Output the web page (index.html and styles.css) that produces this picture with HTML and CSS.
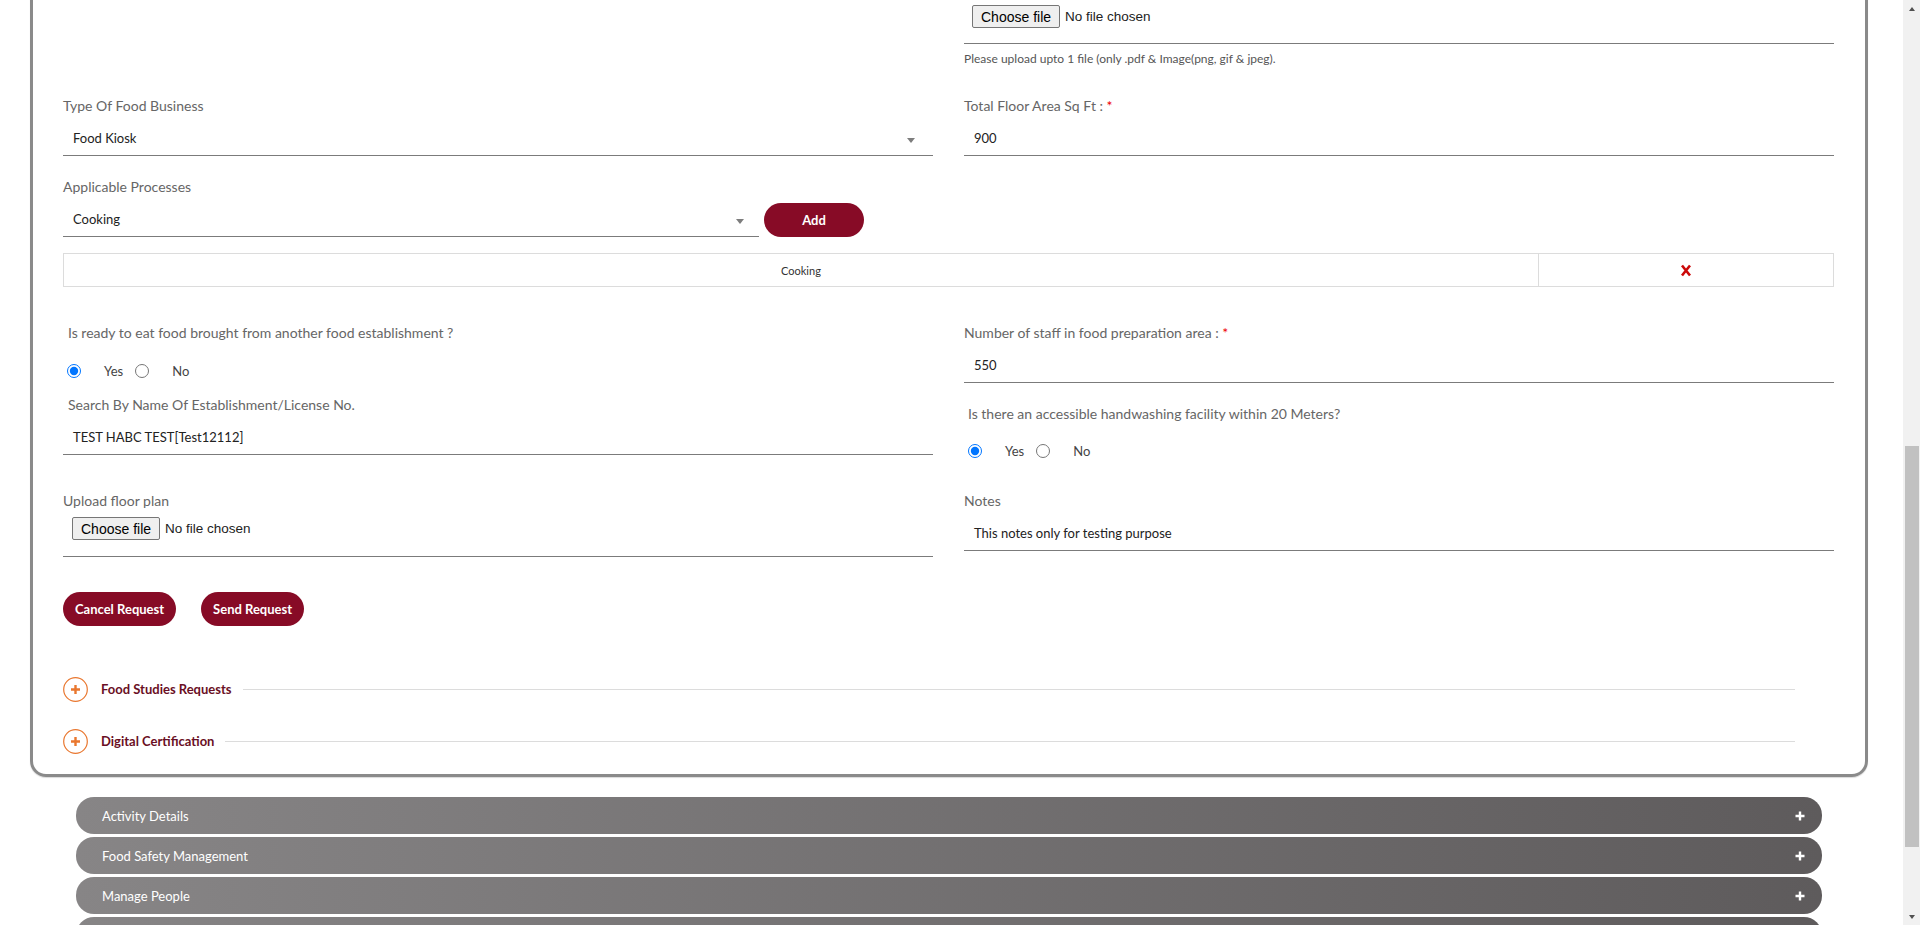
FILE: index.html
```html
<!DOCTYPE html>
<html lang="en">
<head>
<meta charset="utf-8">
<title>Food Business Request</title>
<link rel="stylesheet" href="styles.css">
</head>
<body>
<main class="page">
  <section class="card">
    <div class="card-upper"></div>

    <div class="grid2 row-a">
      <div></div>
      <div class="field">
        <div class="control file-control">
          <button type="button" class="file-btn">Choose file</button>
          <span class="file-name">No file chosen</span>
        </div>
        <p class="hint">Please upload upto 1 file (only .pdf &amp; Image(png, gif &amp; jpeg).</p>
      </div>
    </div>

    <div class="grid2 row-b">
      <div class="field">
        <label class="lbl">Type Of Food Business</label>
        <div class="control select select-wide"><span>Food Kiosk</span><i class="caret"></i></div>
      </div>
      <div class="field">
        <label class="lbl">Total Floor Area Sq Ft : <span class="req">*</span></label>
        <div class="control"><span>900</span></div>
      </div>
    </div>

    <div class="grid2 row-c">
      <div class="field">
        <label class="lbl">Applicable Processes</label>
        <div class="select-add">
          <div class="control select select-narrow"><span>Cooking</span><i class="caret"></i></div>
          <button type="button" class="btn btn-add">Add</button>
        </div>
      </div>
      <div></div>
    </div>

    <table class="proc-table">
      <tr>
        <td class="proc-name">Cooking</td>
        <td class="proc-del">
          <svg class="del-icon" width="12" height="13" viewBox="0 0 12 13" aria-hidden="true">
            <path d="M2 1.5 L10 11.5 M10 1.5 L2 11.5" stroke="#cc0a0a" stroke-width="2.6" fill="none"/>
          </svg>
        </td>
      </tr>
    </table>

    <div class="grid2 row-d">
      <div class="col">
        <label class="lbl q">Is ready to eat food brought from another food establishment ?</label>
        <div class="radios radios-1">
          <input type="radio" name="rte" class="radio" checked><span class="opt opt-yes">Yes</span>
          <input type="radio" name="rte" class="radio"><span class="opt">No</span>
        </div>
        <label class="lbl q search-lbl">Search By Name Of Establishment/License No.</label>
        <div class="control"><span>TEST HABC TEST[Test12112]</span></div>
      </div>
      <div class="col">
        <label class="lbl">Number of staff in food preparation area : <span class="req">*</span></label>
        <div class="control"><span>550</span></div>
        <label class="lbl q2">Is there an accessible handwashing facility within 20 Meters?</label>
        <div class="radios radios-2">
          <input type="radio" name="hw" class="radio" checked><span class="opt opt-yes">Yes</span>
          <input type="radio" name="hw" class="radio"><span class="opt">No</span>
        </div>
      </div>
    </div>

    <div class="grid2 row-e">
      <div class="field">
        <label class="lbl">Upload floor plan</label>
        <div class="control file-control file-control-2">
          <button type="button" class="file-btn">Choose file</button>
          <span class="file-name">No file chosen</span>
        </div>
      </div>
      <div class="field">
        <label class="lbl">Notes</label>
        <div class="control"><span>This notes only for testing purpose</span></div>
      </div>
    </div>

    <div class="actions">
      <button type="button" class="btn btn-action">Cancel Request</button>
      <button type="button" class="btn btn-action">Send Request</button>
    </div>

    <div class="acc">
      <div class="acc-item">
        <svg class="acc-icon" width="25" height="25" viewBox="0 0 25 25" aria-hidden="true">
          <circle cx="12.5" cy="12.5" r="11.8" fill="#fff" stroke="#e9772f" stroke-width="1.2"/>
          <path d="M12.5 8 V17 M8 12.5 H17" stroke="#e9772f" stroke-width="2.4" fill="none"/>
        </svg>
        <span class="acc-title">Food Studies Requests</span>
        <span class="acc-line"></span>
      </div>
      <div class="acc-item">
        <svg class="acc-icon" width="25" height="25" viewBox="0 0 25 25" aria-hidden="true">
          <circle cx="12.5" cy="12.5" r="11.8" fill="#fff" stroke="#e9772f" stroke-width="1.2"/>
          <path d="M12.5 8 V17 M8 12.5 H17" stroke="#e9772f" stroke-width="2.4" fill="none"/>
        </svg>
        <span class="acc-title">Digital Certification</span>
        <span class="acc-line"></span>
      </div>
    </div>
  </section>

  <div class="bars">
    <div class="bar"><span>Activity Details</span><svg class="bar-plus" width="10" height="10" viewBox="0 0 10 10" aria-hidden="true"><path d="M5 0.5 V9.5 M0.5 5 H9.5" stroke="#fff" stroke-width="2.4"/></svg></div>
    <div class="bar"><span>Food Safety Management</span><svg class="bar-plus" width="10" height="10" viewBox="0 0 10 10" aria-hidden="true"><path d="M5 0.5 V9.5 M0.5 5 H9.5" stroke="#fff" stroke-width="2.4"/></svg></div>
    <div class="bar"><span>Manage People</span><svg class="bar-plus" width="10" height="10" viewBox="0 0 10 10" aria-hidden="true"><path d="M5 0.5 V9.5 M0.5 5 H9.5" stroke="#fff" stroke-width="2.4"/></svg></div>
    <div class="bar"><span></span><svg class="bar-plus" width="10" height="10" viewBox="0 0 10 10" aria-hidden="true"><path d="M5 0.5 V9.5 M0.5 5 H9.5" stroke="#fff" stroke-width="2.4"/></svg></div>
    <div class="bar"><span></span><svg class="bar-plus" width="10" height="10" viewBox="0 0 10 10" aria-hidden="true"><path d="M5 0.5 V9.5 M0.5 5 H9.5" stroke="#fff" stroke-width="2.4"/></svg></div>
    <div class="bar"><span></span><svg class="bar-plus" width="10" height="10" viewBox="0 0 10 10" aria-hidden="true"><path d="M5 0.5 V9.5 M0.5 5 H9.5" stroke="#fff" stroke-width="2.4"/></svg></div>
  </div>
</main>

<aside class="scrollbar" aria-hidden="true">
  <span class="sb-btn"><i class="sb-arrow sb-up"></i></span>
  <span class="sb-track"><span class="sb-thumb"></span></span>
  <span class="sb-btn"><i class="sb-arrow sb-down"></i></span>
</aside>

<script src="script.js"></script>
</body>
</html>
```

FILE: styles.css
```css
* { box-sizing: border-box; }

html { scroll-behavior: auto; }

body {
  margin: 0;
  overflow-x: hidden;
  font-family: Lato, "Noto Sans", sans-serif;
  color: #333;
  background: #fff;
}

/* page area leaves room for the scrollbar column on the right */
.page {
  margin-right: 17px;
  padding: 20px 0 31px;
}

/* classic scrollbar drawn over the right edge of the window */
.scrollbar {
  position: fixed;
  top: 0;
  right: 0;
  width: 17px;
  height: 100vh;
  background: #f1f1f1;
  display: flex;
  flex-direction: column;
}
.sb-btn {
  flex: 0 0 17px;
  display: flex;
  align-items: center;
  justify-content: center;
}
.sb-arrow {
  width: 0;
  height: 0;
  border-left: 3.5px solid transparent;
  border-right: 3.5px solid transparent;
}
.sb-up { border-bottom: 4px solid #505050; margin-left: 1px; }
.sb-down { border-top: 4px solid #505050; margin-left: 1px; }
.sb-track {
  flex: 1;
  padding-top: 429px;
}
.sb-thumb {
  display: block;
  height: 401px;
  margin: 0 1px 0 2px;
  background: #c1c1c1;
}

.card {
  margin: 0 35px 0 30px;
  border: 3px solid #8a8a8a;
  border-radius: 16px;
  padding: 0 31px 20px 30px;
  box-shadow: 0 1px 1px rgba(0, 0, 0, 0.15);
}

.card-upper { height: 969px; }

.grid2 {
  display: grid;
  grid-template-columns: 1fr 1fr;
  column-gap: 31px;
  align-items: start;
}

.row-b { margin-top: 28px; }
.row-c { margin-top: 21px; }
.row-d { margin-top: 36px; }
.row-e { margin-top: 30px; }

.field, .col { display: flex; flex-direction: column; }

.lbl {
  display: block;
  font-size: 14px;
  line-height: 20px;
  color: #666;
}

.req { color: #e00; }

.control {
  height: 35px;
  margin-top: 5px;
  border-bottom: 1px solid #7b7b7b;
  display: flex;
  align-items: center;
  padding-left: 10px;
  font-size: 13px;
  color: #222;
}

.select { justify-content: space-between; }
.select-wide { padding-right: 18px; }
.select-narrow { padding-right: 15px; }

.caret {
  width: 0;
  height: 0;
  border-left: 4px solid transparent;
  border-right: 4px solid transparent;
  border-top: 5px solid #7d7d7d;
  margin-top: 4px;
}

.file-control {
  height: 41px;
  margin-top: 0;
  align-items: flex-start;
  padding: 2px 0 0 8px;
}

.file-control-2 {
  margin-top: 5px;
  padding: 1px 0 0 9px;
}

.file-btn {
  height: 23px;
  padding: 0 8px;
  background: #efefef;
  border: 1px solid #767676;
  border-radius: 2px;
  font-family: "Liberation Sans", Arial, sans-serif;
  font-size: 14px;
  color: #000;
  cursor: pointer;
}

.file-name {
  margin-left: 5px;
  line-height: 23px;
  font-family: "Liberation Sans", Arial, sans-serif;
  font-size: 13.5px;
  color: #222;
}

.hint {
  margin: 6px 0 0;
  font-size: 12px;
  line-height: 18px;
  color: #555;
}

.select-add {
  display: flex;
  align-items: flex-end;
  gap: 5px;
  margin-top: 5px;
}
.select-add .control {
  flex: 0 0 80%;
  margin-top: 0;
}

.btn {
  height: 34px;
  border: 0;
  border-radius: 17px;
  background: #870b26;
  color: #fff;
  font-family: Lato, "Noto Sans", sans-serif;
  font-weight: 700;
  font-size: 13px;
  cursor: pointer;
}

.btn-add { width: 100px; }
.btn-action { padding: 0 12px; }

.proc-table {
  width: 100%;
  border-collapse: collapse;
  margin-top: 16px;
}
.proc-table td {
  height: 33px;
  padding: 0;
  border: 1px solid #dcdcdc;
  text-align: center;
  font-size: 11px;
  color: #333;
}
.proc-name { width: 83.33%; }
.del-icon { display: inline-block; vertical-align: middle; }

.q { padding-left: 5px; }
.search-lbl { margin-top: 14px; }
.q2 { padding-left: 4px; margin-top: 21px; }

.radios {
  display: flex;
  align-items: center;
  height: 21px;
  padding-left: 4px;
  font-size: 13px;
  color: #444;
}
.radios-1 { margin-top: 17px; }
.radios-2 { margin-top: 16px; }

.radio {
  width: 14px;
  height: 14px;
  margin: 0 23px 0 0;
}
.opt-yes { margin-right: 12px; }

.actions {
  display: flex;
  gap: 25px;
  margin-top: 35px;
}

.acc { margin-top: 50px; }
.acc-item {
  display: flex;
  align-items: center;
  height: 26px;
}
.acc-item + .acc-item { margin-top: 26px; }
.acc-icon { flex: 0 0 25px; }
.acc-title {
  margin-left: 13px;
  font-size: 13px;
  font-weight: 700;
  color: #6a0f24;
}
.acc-line {
  flex: 1;
  height: 1px;
  background: #dcdcdc;
  margin: 0 39px 0 11px;
}

.bars {
  margin: 20px 81px 0 76px;
  display: flex;
  flex-direction: column;
  gap: 3px;
}
.bar {
  height: 37px;
  border-radius: 18px;
  background: linear-gradient(to right, #878586, #5e5b5c);
  display: flex;
  align-items: center;
  justify-content: space-between;
  padding: 0 17px 0 26px;
  color: #fff;
  font-size: 13px;
}
.bar-plus { display: block; }
```

FILE: script.js
```js
window.scrollTo(0, 989);
window.addEventListener('load', function () {
  window.scrollTo(0, 989);
});
```
